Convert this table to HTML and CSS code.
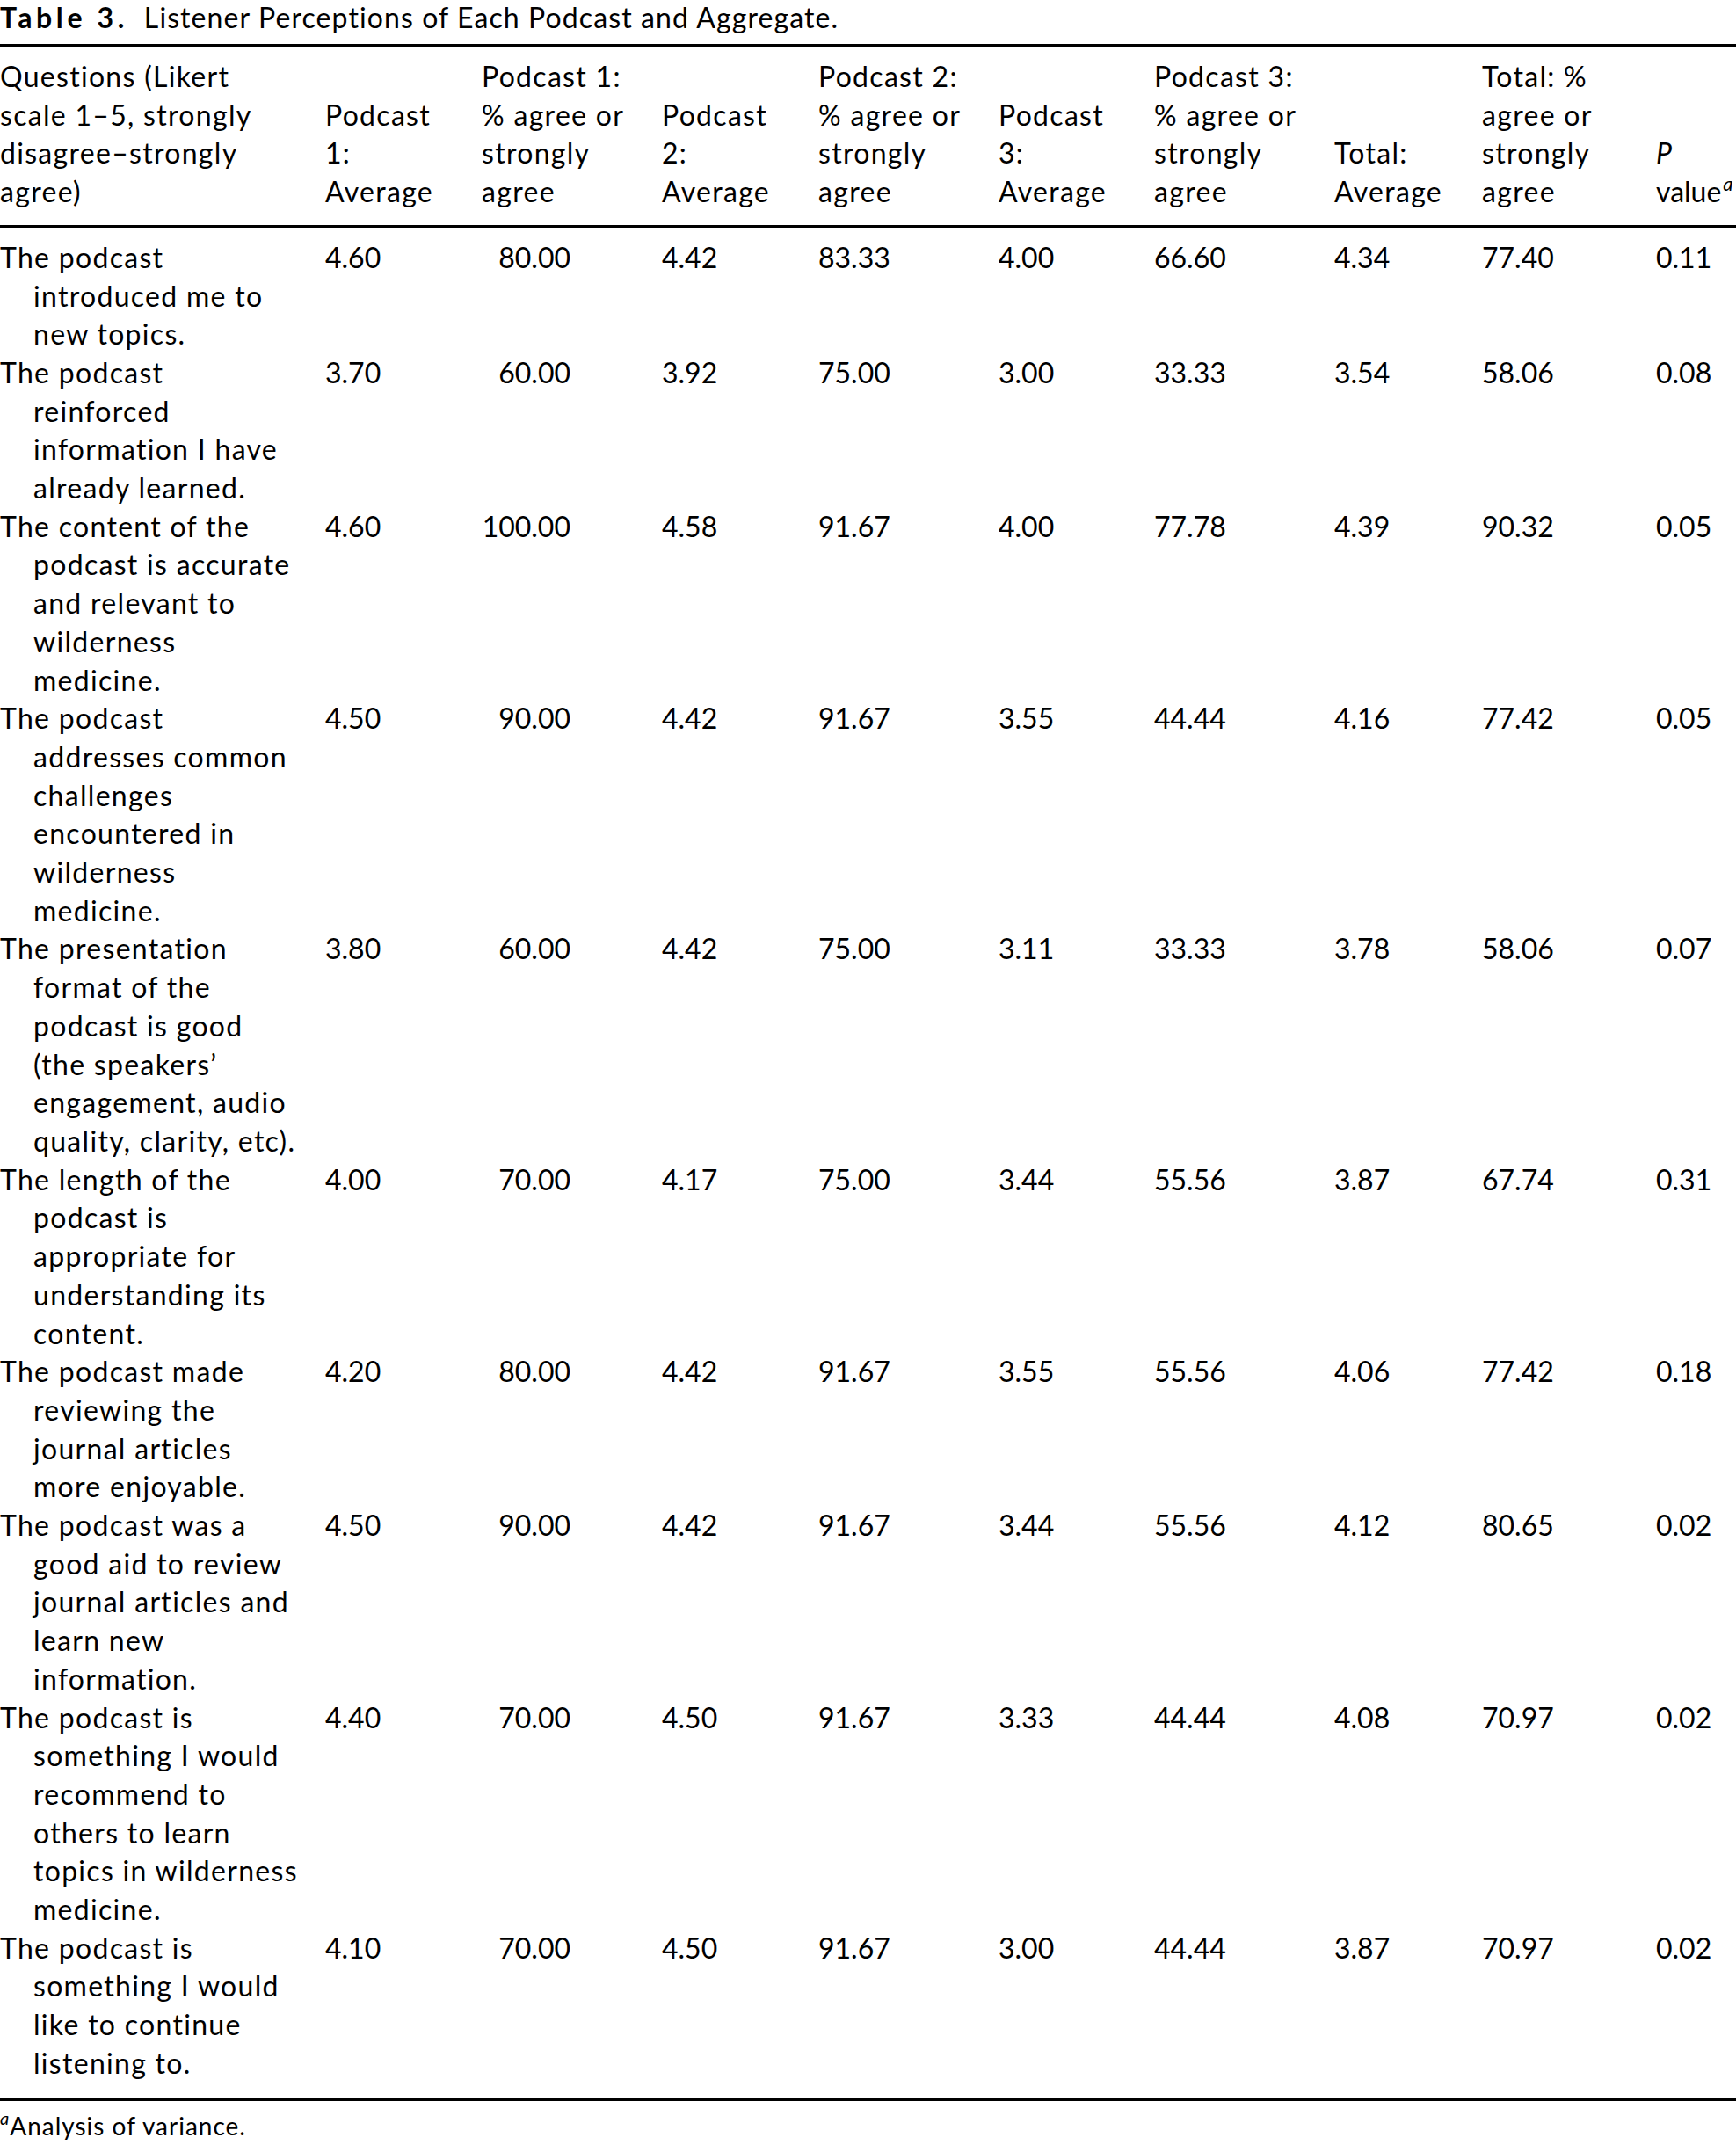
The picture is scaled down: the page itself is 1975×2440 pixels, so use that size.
FILE: index.html
```html
<!DOCTYPE html>
<html lang="en">
<head>
<meta charset="utf-8">
<title>Table 3</title>
<link rel="stylesheet" href="styles.css">
</head>
<body>
<div class="page">
  <p class="caption"><span class="label">Table 3.</span>Listener Perceptions of Each Podcast and Aggregate.</p>
  <table class="data">
    <colgroup>
      <col class="w-q"><col class="w-avg"><col class="w-pct"><col class="w-avg"><col class="w-pct"><col class="w-avg3"><col class="w-pct"><col class="w-tavg"><col class="w-tpct"><col class="w-p">
    </colgroup>
    <thead>
      <tr>
        <th>Questions (Likert<br>scale 1–5, strongly<br>disagree–strongly<br>agree)</th>
        <th>Podcast<br>1:<br>Average</th>
        <th>Podcast 1:<br>% agree or<br>strongly<br>agree</th>
        <th>Podcast<br>2:<br>Average</th>
        <th>Podcast 2:<br>% agree or<br>strongly<br>agree</th>
        <th>Podcast<br>3:<br>Average</th>
        <th>Podcast 3:<br>% agree or<br>strongly<br>agree</th>
        <th>Total:<br>Average</th>
        <th>Total: %<br>agree or<br>strongly<br>agree</th>
        <th class="pcol"><i>P</i><br>value<span class="sup">a</span></th>
      </tr>
    </thead>
    <tbody>
      <tr>
        <td class="q">The podcast<br>introduced me to<br>new topics.</td>
        <td>4.60</td><td class="r">80.00</td><td>4.42</td><td>83.33</td><td>4.00</td><td>66.60</td><td>4.34</td><td>77.40</td><td>0.11</td>
      </tr>
      <tr>
        <td class="q">The podcast<br>reinforced<br>information I have<br>already learned.</td>
        <td>3.70</td><td class="r">60.00</td><td>3.92</td><td>75.00</td><td>3.00</td><td>33.33</td><td>3.54</td><td>58.06</td><td>0.08</td>
      </tr>
      <tr>
        <td class="q">The content of the<br>podcast is accurate<br>and relevant to<br>wilderness<br>medicine.</td>
        <td>4.60</td><td class="r">100.00</td><td>4.58</td><td>91.67</td><td>4.00</td><td>77.78</td><td>4.39</td><td>90.32</td><td>0.05</td>
      </tr>
      <tr>
        <td class="q">The podcast<br>addresses common<br>challenges<br>encountered in<br>wilderness<br>medicine.</td>
        <td>4.50</td><td class="r">90.00</td><td>4.42</td><td>91.67</td><td>3.55</td><td>44.44</td><td>4.16</td><td>77.42</td><td>0.05</td>
      </tr>
      <tr>
        <td class="q">The presentation<br>format of the<br>podcast is good<br>(the speakers’<br>engagement, audio<br>quality, clarity, etc).</td>
        <td>3.80</td><td class="r">60.00</td><td>4.42</td><td>75.00</td><td>3.11</td><td>33.33</td><td>3.78</td><td>58.06</td><td>0.07</td>
      </tr>
      <tr>
        <td class="q">The length of the<br>podcast is<br>appropriate for<br>understanding its<br>content.</td>
        <td>4.00</td><td class="r">70.00</td><td>4.17</td><td>75.00</td><td>3.44</td><td>55.56</td><td>3.87</td><td>67.74</td><td>0.31</td>
      </tr>
      <tr>
        <td class="q">The podcast made<br>reviewing the<br>journal articles<br>more enjoyable.</td>
        <td>4.20</td><td class="r">80.00</td><td>4.42</td><td>91.67</td><td>3.55</td><td>55.56</td><td>4.06</td><td>77.42</td><td>0.18</td>
      </tr>
      <tr>
        <td class="q">The podcast was a<br>good aid to review<br>journal articles and<br>learn new<br>information.</td>
        <td>4.50</td><td class="r">90.00</td><td>4.42</td><td>91.67</td><td>3.44</td><td>55.56</td><td>4.12</td><td>80.65</td><td>0.02</td>
      </tr>
      <tr>
        <td class="q">The podcast is<br>something I would<br>recommend to<br>others to learn<br>topics in wilderness<br>medicine.</td>
        <td>4.40</td><td class="r">70.00</td><td>4.50</td><td>91.67</td><td>3.33</td><td>44.44</td><td>4.08</td><td>70.97</td><td>0.02</td>
      </tr>
      <tr>
        <td class="q">The podcast is<br>something I would<br>like to continue<br>listening to.</td>
        <td>4.10</td><td class="r">70.00</td><td>4.50</td><td>91.67</td><td>3.00</td><td>44.44</td><td>3.87</td><td>70.97</td><td>0.02</td>
      </tr>
    </tbody>
  </table>
  <p class="note"><span class="sup">a</span>Analysis of variance.</p>
</div>
</body>
</html>
```

FILE: styles.css
```css
html, body {
  margin: 0;
  padding: 0;
  background: #ffffff;
}

.page {
  width: 1975px;
  font-family: Lato, "Open Sans", "Liberation Sans", sans-serif;
  font-size: 32px;
  letter-spacing: 1.3px;
  color: #000000;
}

.caption {
  margin: 0 0 11px 0;
  line-height: 39px;
  white-space: nowrap;
  letter-spacing: 1.1px;
}

.caption .label {
  font-weight: 700;
  letter-spacing: 4.6px;
  margin-right: 18px;
}

.data {
  width: 1975px;
  table-layout: fixed;
  border-collapse: separate;
  border-spacing: 0;
  border-top: 3px solid #000;
  border-bottom: 3px solid #000;
}

.w-q { width: 370px; }
.w-avg { width: 178px; }
.w-pct { width: 205px; }
.w-avg3 { width: 177px; }
.w-tavg { width: 168px; }
.w-tpct { width: 198px; }
.w-p { width: 92px; }

.data th,
.data td {
  padding: 0;
  text-align: left;
  font-weight: 400;
  line-height: 43.7px;
  white-space: nowrap;
}

.data th {
  vertical-align: bottom;
  padding-top: 12px;
  padding-bottom: 16px;
  border-bottom: 3px solid #000;
}

.data th.pcol {
  letter-spacing: 0;
}

.data td {
  vertical-align: top;
  letter-spacing: 0;
}

.data td.q {
  letter-spacing: 1.3px;
  padding-left: 38px;
  text-indent: -38px;
}

.data tbody tr:first-child td {
  padding-top: 12px;
}

.data tbody tr:last-child td {
  padding-bottom: 18px;
}

.data td.r {
  text-align: right;
  padding-right: 104px;
}

.sup {
  font-style: italic;
  font-size: 22px;
  letter-spacing: 0;
  line-height: 0;
  vertical-align: 13px;
  margin-left: 2px;
}

.note {
  margin: 11px 0 0 0;
  font-size: 28px;
  letter-spacing: 1px;
  line-height: 34px;
  white-space: nowrap;
}

.note .sup {
  font-size: 20px;
  vertical-align: 12px;
  margin-left: 0;
  margin-right: 1px;
}
```
